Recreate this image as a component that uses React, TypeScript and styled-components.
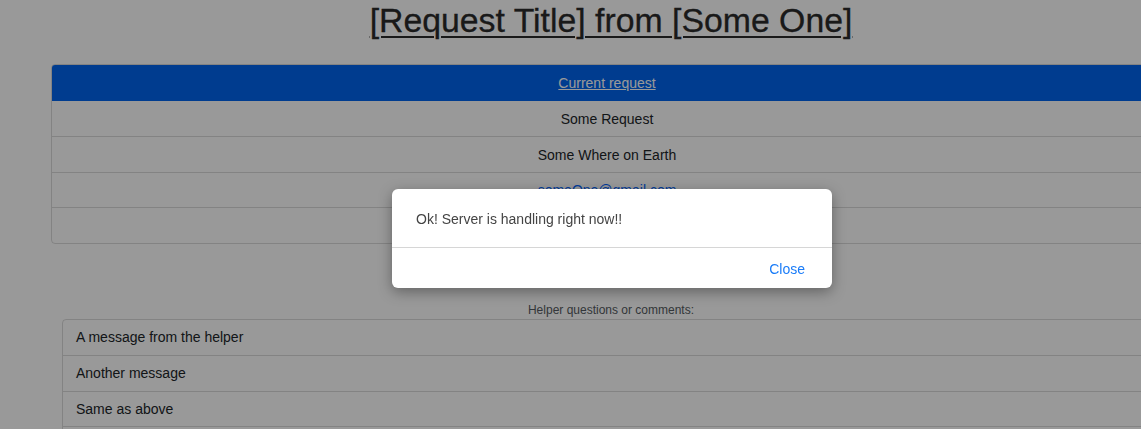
import React from "react";
import styled, { createGlobalStyle } from "styled-components";

const Global = createGlobalStyle`
  html, body { margin: 0; padding: 0; overflow: hidden; background: #fff; }
  body { font-family: "Liberation Sans", Arial, sans-serif; color: #212529; }
  * { box-sizing: border-box; }
`;

const Page = styled.div`
  width: 1222px;
  display: flex;
  flex-direction: column;
`;

const Title = styled.h1`
  margin: 0;
  padding-top: 1px;
  text-align: center;
  font-size: 33.8px;
  line-height: 38px;
  font-weight: 400;
  text-decoration: underline;
  text-underline-offset: 4px;
  text-decoration-thickness: 2px;
  color: #2a2a2a;
  -webkit-text-stroke: 0.3px #2a2a2a;
`;

const Card = styled.div`
  margin: 25px 0 0 51px;
  width: 1112px;
  border: 1px solid rgba(0, 0, 0, 0.14);
  border-radius: 4px;
  overflow: hidden;
  display: flex;
  flex-direction: column;
`;

const CardHeader = styled.div`
  background: #0064ee;
  height: 35.5px;
  display: flex;
  align-items: center;
  justify-content: center;
  font-size: 14px;
  a {
    color: #fff;
    text-decoration: underline;
  }
`;

const Row = styled.div<{ $first?: boolean }>`
  height: 35.5px;
  padding-top: 1px;
  border-top: ${(p) => (p.$first ? "none" : "1px solid rgba(0, 0, 0, 0.14)")};
  display: flex;
  align-items: center;
  justify-content: center;
  font-size: 14px;
  color: #212529;
  a { color: #0064ff; text-decoration: none; }
`;

const Label = styled.div`
  margin-top: 59px;
  text-align: center;
  font-size: 12px;
  line-height: 14px;
  color: #555b61;
`;

const List = styled.ul`
  list-style: none;
  margin: 2px 0 0 62px;
  padding: 0;
  width: 1100px;
  border: 1px solid rgba(0, 0, 0, 0.14);
  border-radius: 4px;
`;

const Item = styled.li`
  height: 35.5px;
  padding: 0 13px;
  display: flex;
  align-items: center;
  font-size: 14px;
  color: #212529;
  & + & { border-top: 1px solid rgba(0, 0, 0, 0.14); }
`;

const Backdrop = styled.div`
  position: fixed;
  inset: 0;
  background: rgba(0, 0, 0, 0.4);
`;

const Modal = styled.div`
  position: fixed;
  left: 392px;
  top: 189px;
  width: 440px;
  background: #fff;
  border-radius: 6px;
  box-shadow: 0 4px 14px rgba(0, 0, 0, 0.35);
  display: flex;
  flex-direction: column;
`;

const ModalBody = styled.div`
  height: 59px;
  padding: 1px 24px 0;
  display: flex;
  align-items: center;
  font-size: 14px;
  color: #444;
  border-bottom: 1px solid #d6d6d6;
`;

const ModalFooter = styled.div`
  height: 40px;
  padding: 1px 27px 0 24px;
  display: flex;
  align-items: center;
  justify-content: flex-end;
`;

const CloseButton = styled.button`
  border: none;
  background: none;
  padding: 0;
  font-family: inherit;
  font-size: 14px;
  color: #1a7cf8;
  cursor: pointer;
`;

export default function App() {
  const messages = ["A message from the helper", "Another message", "Same as above", "Thanks"];
  return (
    <>
      <Global />
      <Page>
        <Title>[Request Title] from [Some One]</Title>
        <Card>
          <CardHeader>
            <a href="#">Current request</a>
          </CardHeader>
          <Row $first>Some Request</Row>
          <Row>Some Where on Earth</Row>
          <Row>
            <a href="#">someOne@gmail.com</a>
          </Row>
          <Row>2 days ago</Row>
        </Card>
        <Label>Helper questions or comments:</Label>
        <List>
          {messages.map((m) => (
            <Item key={m}>{m}</Item>
          ))}
        </List>
      </Page>
      <Backdrop />
      <Modal>
        <ModalBody>Ok! Server is handling right now!!</ModalBody>
        <ModalFooter>
          <CloseButton>Close</CloseButton>
        </ModalFooter>
      </Modal>
    </>
  );
}
